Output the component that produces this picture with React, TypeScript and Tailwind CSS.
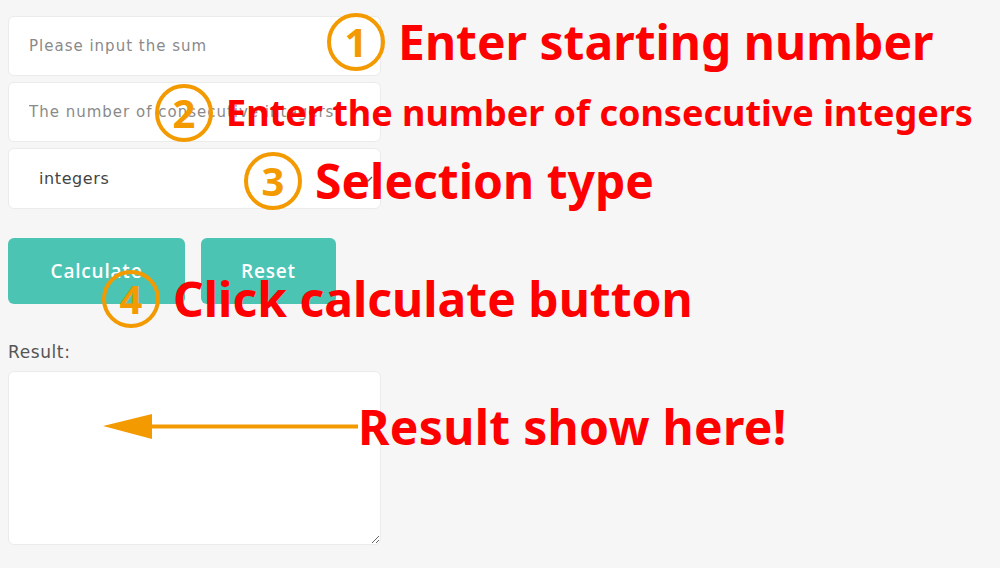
import { useState } from 'react'

const ui = { fontFamily: '"DejaVu Sans", "Open Sans", sans-serif' }
const note = { fontFamily: '"Noto Sans", "Open Sans", sans-serif' }

const field =
  'h-[60px] w-[373px] rounded-md border border-[#ebebeb] bg-white px-5 text-[15px] tracking-[1px] text-[#333] outline-none placeholder:text-[#8a8a8a]'

function Circled({ n }: { n: number }) {
  return (
    <div
      className="flex h-[58px] w-[58px] shrink-0 items-center justify-center rounded-full border-[4px] border-[#f39a00] text-[40px] font-bold leading-none text-[#f39a00]"
      style={note}
    >
      {n}
    </div>
  )
}

// A callout: orange circled step number followed by the red caption.
function Step({ n, text, className, size }: { n: number; text: string; className: string; size: string }) {
  return (
    <div className={`absolute flex items-center gap-[13px] ${className}`}>
      <Circled n={n} />
      <span className={`whitespace-nowrap font-bold text-[#ff0000] ${size}`} style={note}>
        {text}
      </span>
    </div>
  )
}

export default function App() {
  const [kind, setKind] = useState('integers')

  return (
    <div className="relative h-[568px] w-[1000px] overflow-hidden bg-[#f6f6f6]" style={ui}>
      <div className="flex w-[390px] flex-col pl-2 pt-4">
        <div className="flex flex-col gap-[6px]">
          <input className={field} placeholder="Please input the sum" />
          <input className={field} placeholder="The number of consecutive integers" />
          <div className="relative h-[61px] w-[373px] rounded-md border border-[#ebebeb] bg-white">
            <select
              value={kind}
              onChange={(e) => setKind(e.target.value)}
              className="h-full w-full appearance-none bg-transparent pl-[30px] text-[16px] tracking-[0.6px] text-[#444] outline-none"
            >
              <option value="integers">integers</option>
              <option value="odd">odd integers</option>
              <option value="even">even integers</option>
            </select>
            <svg className="pointer-events-none absolute right-[6px] top-[24px] h-3 w-3" viewBox="0 0 12 12">
              <path d="M2 4l4 4 4-4" fill="none" stroke="#555" strokeWidth="1.3" />
            </svg>
          </div>
        </div>

        <div className="mt-[29px] flex gap-4" style={{ fontFamily: '"Open Sans", sans-serif' }}>
          <button className="h-[66px] w-[177px] rounded-md bg-[#4cc4b3] text-[19px] font-semibold tracking-[0.8px] text-white">
            Calculate
          </button>
          <button className="h-[66px] w-[135px] rounded-md bg-[#4cc4b3] text-[19px] font-semibold tracking-[0.8px] text-white">
            Reset
          </button>
        </div>

        <label className="mt-[38px] text-[17px] leading-5 tracking-[0.6px] text-[#555]">Result:</label>
        <textarea className="mt-[9px] h-[174px] w-[373px] rounded-md border border-[#ebebeb] bg-white outline-none" />
      </div>

      {/* annotation layer */}
      <Step n={1} text="Enter starting number" className="left-[327px] top-[13px]" size="text-[48px] leading-[58px]" />
      <Step
        n={2}
        text="Enter the number of consecutive integers"
        className="left-[155px] top-[84px]"
        size="text-[36px] leading-[58px]"
      />
      <Step n={3} text="Selection type" className="left-[244px] top-[152px]" size="text-[48px] leading-[58px]" />
      <Step n={4} text="Click calculate button" className="left-[102px] top-[270px]" size="text-[48px] leading-[58px]" />

      <div className="absolute left-[100px] top-[395px] flex items-center">
        <svg width="258" height="36" viewBox="0 0 258 36">
          <path d="M3 17 L52 5 L52 30 Z" fill="#f39a00" />
          <path d="M50 17.5 H258" stroke="#f39a00" strokeWidth="4" />
        </svg>
        <span className="whitespace-nowrap text-[48px] font-bold leading-[64px] tracking-[0.3px] text-[#ff0000]" style={note}>
          Result show here!
        </span>
      </div>
    </div>
  )
}
